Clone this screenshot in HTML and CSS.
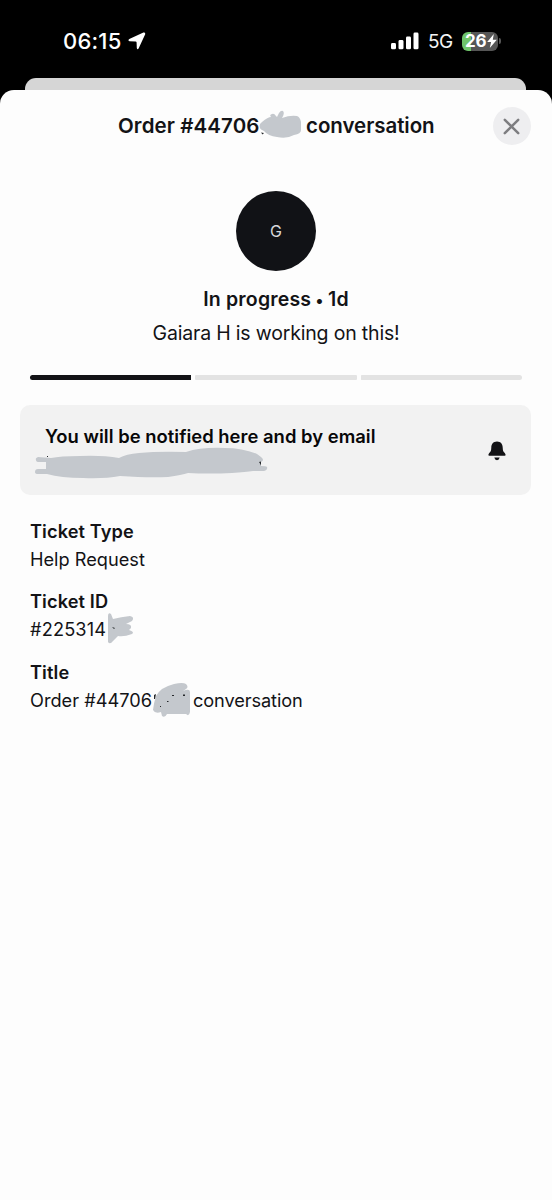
FILE: index.html
```
<!DOCTYPE html>
<html lang="en">
<head>
<meta charset="utf-8">
<title>Order conversation</title>
<link rel="stylesheet" href="styles.css">
</head>
<body>
<div class="phone">
  <header class="status">
    <span class="clock">06:15</span>
    <svg class="location" width="18" height="18" viewBox="0 0 18 18"><path d="M15.4.6 1.3 6.9Q-.6 8.4 1.5 9.2L7.6 9.4Q8.5 9.5 8.6 10.4L8.800 16Q9.3 18.2 10.6 16.4L17.2 2.3Q17.6 0 15.4.6Z"/></svg>
    <svg class="signal" width="28" height="18" viewBox="0 0 28 18"><rect y="11" width="5" height="6.3" rx="1.4"/><rect x="7.5" y="8" width="5" height="9.3" rx="1.4"/><rect x="15" y="4.5" width="5" height="12.8" rx="1.4"/><rect x="22.5" y=".5" width="5" height="16.8" rx="1.4"/></svg>
    <span class="network">5G</span>
    <span class="battery"><span class="level">26</span><svg width="10" height="14" viewBox="0 0 10 14"><path d="M6.8 0 .2 8h3.9L2.8 14 9.8 5.8H5.8Z"/></svg></span>
    <span class="battery-tip"></span>
  </header>
  <div class="sheet-behind"></div>
  <main class="sheet">
    <div class="titlebar">
      <h1 class="heading"><span class="heading-order">Order #44706</span><svg class="mask-heading" width="43" height="32" viewBox="0 0 43 32"><path class="ink" d="M3 12Q9 7 12 7Q10 5 13 4Q15 3 17 6L18 7L20 3Q22 0 24 1Q26 3 23 8Q31 5 38 6Q41 7 42 12V20Q42 24 35 25Q28 29 18 27Q9 26 5 21Q-1 19 1 14Z"/><path class="speck" d="M2 22.5l3 .5-1.5 1.6Z"/></svg><span class="heading-conv">conversation</span></h1>
      <button class="close" aria-label="Close"><svg width="17" height="17" viewBox="0 0 17 17"><path d="M1.8 1.8 15.2 15.2M15.2 1.8 1.8 15.2"/></svg></button>
    </div>
    <div class="avatar">G</div>
    <p class="state"><span>In progress <b class="dot">•</b> 1d</span></p>
    <p class="working"><span>Gaiara H is working on this!</span></p>
    <div class="progress"><i class="step done"></i><i class="step"></i><i class="step"></i></div>
    <section class="notice">
      <div>
        <p class="notice-text">You will be notified here and by email</p>
        <svg class="mask-email" width="233" height="34" viewBox="0 0 233 34"><path class="ink" d="M3 10Q0 11 1 13Q1 15 4 15H11V22H3Q0 22 0 25Q0 27 3 27H12Q26 31 48 31Q69 32 85 29Q113 31 133 30Q147 28 153 26Q174 27 197 26Q211 25 218 24H229Q233 23 232 20Q231 19 226 19V15Q230 13 226 10L222 7Q208 1 190 1Q166 0 151 5Q124 4 104 6Q91 7 84 11Q67 8 45 9Q25 9 16 11Z"/><path class="speck" d="M12 9h1v1h-1ZM224 15l2-.5v4l-1-2Z"/></svg>
      </div>
      <svg class="bell" width="18" height="20" viewBox="0 0 18 20"><path d="M9 .5C5 .5 3.4 3.4 3.3 6.5 3.2 9.8 2.8 10.5 1.2 12Q-.5 14.6 1.3 14.8H16.7Q18.5 14.6 16.8 12C15.2 10.5 14.8 9.8 14.7 6.5 14.6 3.4 13 .5 9 .5ZM6.3 16.6H11.7Q11.2 19.2 9 19.2T6.3 16.6Z"/></svg>
    </section>
    <dl class="details">
      <dt>Ticket Type</dt>
      <dd class="v-type">Help Request</dd>
      <dt>Ticket ID</dt>
      <dd class="v-id"><span>#225314</span><svg class="mask-id" width="28" height="32" viewBox="0 0 28 32"><path class="ink" d="M1 3Q1 -1 4 1L6 6Q14 4 23 3Q28 4 25 8L19 11Q25 11 24 15L22 17Q28 19 25 21Q17 24 11 23L6 28Q3 32 1 29Z"/><path class="speck" d="M5 14l3 1-1 1Z"/></svg></dd>
      <dt>Title</dt>
      <dd class="v-title"><span class="order">Order #44706</span><svg class="mask-title" width="40" height="34" viewBox="0 0 40 34"><path class="ink" d="M4 13Q9 4 22 1Q31 -1 34 1Q37 4 34 6L31 8Q38 5 38 9V29Q37 34 34 31H15Q13 35 10 33L9 29Q3 31 1 27Q2 19 4 13Z"/><path class="speck" d="M2 12l2-1-1 5H2ZM20 12h2v1h-2ZM31 11.5h2v1.5h-2ZM15 18h1.5v1H15ZM8 23h1v1H8Z"/></svg><span class="conv">conversation</span></dd>
    </dl>
  </main>
</div>
</body>
</html>
```
FILE: styles.css
```
* { box-sizing: border-box; }
body { margin: 0; background: #000; font-family: Inter, "Liberation Sans", sans-serif; color: #131316; }
h1, p, dl, dd, dt { margin: 0; font-weight: 400; white-space: nowrap; }
svg { flex: none; display: block; overflow: visible; }
.phone { height: 1200px; display: flex; flex-direction: column; overflow: hidden; background: #000; }
.status { height: 78px; flex: none; display: flex; align-items: center; padding: 4px 0 0 63px; color: #fff; }
.clock { width: 65px; font-size: 22px; font-weight: 500; letter-spacing: .2px; line-height: 28px; }
.location, .signal { fill: #fff; }
.signal { margin-left: 245px; }
.network { width: 34px; margin-left: 9px; font-size: 19px; letter-spacing: -.5px; color: #f4f4f4; }
.battery { width: 36px; height: 19px; border-radius: 6px; background: linear-gradient(90deg, #6fc46a 9px, #565656 9px); display: flex; align-items: center; padding-left: 3px; fill: #fff; }
.level { width: 21.5px; font-size: 17px; font-weight: 700; letter-spacing: -.3px; line-height: 19px; }
.battery-tip { width: 2px; height: 6px; margin-left: 1px; border-radius: 0 2px 2px 0; background: #565656; }
.sheet-behind { flex: none; height: 12px; margin: 0 26px 0 25px; border-radius: 11px 11px 0 0; background: #d6d6d6; }
.sheet { flex: 1; border-radius: 14px 14px 0 0; background: #fdfdfd; }
.titlebar { height: 72px; display: flex; align-items: center; padding-left: 118px; }
.heading { width: 374.5px; display: flex; align-items: center; font-size: 20.5px; font-weight: 600; line-height: 28px; }
.heading-order { width: 141px; letter-spacing: .1px; }
.heading-conv { margin-left: 4px; letter-spacing: -.05px; }
.ink { fill: #c4c8cd; }
.speck { fill: #25282b; }
.close { width: 38px; height: 38px; padding: 0; border: 0; border-radius: 50%; background: #eeeef0; display: grid; place-items: center; }
.close svg { fill: none; stroke: #7d7d80; stroke-width: 2.5; stroke-linecap: round; }
.avatar { width: 80px; height: 80px; margin: 29px auto 0; border-radius: 50%; background: #111216; color: #d8d8da; font-size: 16px; display: grid; place-items: center; }
.state { margin-top: 14px; text-align: center; font-size: 19.5px; font-weight: 600; line-height: 28px; letter-spacing: .18px; }
.dot { font-size: 16px; line-height: 1; }
.working { margin-top: 6px; text-align: center; font-size: 19.5px; line-height: 28px; letter-spacing: -.18px; }
.progress { margin: 28px 30px 0; display: grid; grid-template-columns: repeat(3, 1fr); gap: 4px; }
.step { height: 5px; background: #e3e3e3; border-radius: 1px; }
.step.done { background: #131316; border-radius: 3px 0 0 3px; }
.step:last-child { border-radius: 1px 3px 3px 1px; }
.notice { height: 90px; margin: 25px 21px 0 20px; border-radius: 10px; background: #f2f2f2; display: flex; justify-content: space-between; align-items: center; padding: 2px 25px 0 15px; }
.notice-text { padding: 2px 0 0 10px; font-size: 18.4px; font-weight: 600; line-height: 26px; letter-spacing: .03px; color: #070708; }
.mask-email { margin-top: -2px; }
.bell { fill: #131316; }
.details { margin: 22px 30px 0; font-size: 18.2px; line-height: 28px; }
dt { font-weight: 600; letter-spacing: .1px; }
dd { margin-bottom: 14.3px; height: 28px; }
.v-id, .v-title { display: flex; align-items: center; }
.v-id span { width: 77px; letter-spacing: .15px; }
.order { width: 122px; }
.conv { margin-left: 1px; letter-spacing: -.1px; }
```
